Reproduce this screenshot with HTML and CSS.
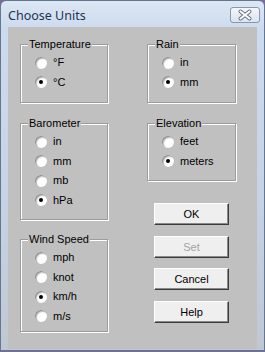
FILE: index.html
```html
<!DOCTYPE html>
<html>
<head>
<meta charset="utf-8">
<link rel="stylesheet" href="styles.css">
</head>
<body>
<div class="window">
  <div class="titlebar">
    <span class="title">Choose Units</span>
    <span class="close">
      <svg width="30" height="16" viewBox="0 0 30 16">
        <path d="M10.5 4.5 L19.5 11.5 M19.5 4.5 L10.5 11.5" stroke="#5d6d84" stroke-width="4" stroke-linecap="round" fill="none"/>
        <path d="M10.5 4.5 L19.5 11.5 M19.5 4.5 L10.5 11.5" stroke="#ffffff" stroke-width="2.2" stroke-linecap="round" fill="none"/>
      </svg>
    </span>
  </div>
  <div class="client">
    <div class="col">
      <div class="group g-temp">
        <span class="legend">Temperature</span>
        <div class="opt"><span class="radio"></span>°F</div>
        <div class="opt"><span class="radio on"></span>°C</div>
      </div>
      <div class="group g-baro">
        <span class="legend">Barometer</span>
        <div class="opt"><span class="radio"></span>in</div>
        <div class="opt"><span class="radio"></span>mm</div>
        <div class="opt"><span class="radio"></span>mb</div>
        <div class="opt"><span class="radio on"></span>hPa</div>
      </div>
      <div class="group g-wind">
        <span class="legend">Wind Speed</span>
        <div class="opt"><span class="radio"></span>mph</div>
        <div class="opt"><span class="radio"></span>knot</div>
        <div class="opt"><span class="radio on"></span>km/h</div>
        <div class="opt"><span class="radio"></span>m/s</div>
      </div>
    </div>
    <div class="col">
      <div class="group g-rain">
        <span class="legend">Rain</span>
        <div class="opt"><span class="radio"></span>in</div>
        <div class="opt"><span class="radio on"></span>mm</div>
      </div>
      <div class="group g-elev">
        <span class="legend">Elevation</span>
        <div class="opt"><span class="radio"></span>feet</div>
        <div class="opt"><span class="radio on"></span>meters</div>
      </div>
      <div class="buttons">
        <button class="btn">OK</button>
        <button class="btn" disabled>Set</button>
        <button class="btn">Cancel</button>
        <button class="btn">Help</button>
      </div>
    </div>
  </div>
</div>
</body>
</html>
```

FILE: styles.css
```css
html, body {
  margin: 0;
  padding: 0;
}
body {
  width: 265px;
  height: 352px;
  background: #7a6a9c;
  overflow: hidden;
  font-family: "Liberation Sans", Arial, sans-serif;
  font-size: 11px;
  color: #000;
}
.window {
  box-sizing: border-box;
  width: 265px;
  height: 351px;
  border: 1px solid #65768f;
  border-radius: 6px 6px 0 0;
  background: linear-gradient(to bottom, #dce7f4 0px, #cddbee 27px, #c6d3e4 200px, #c0c7d2 351px);
  display: flex;
  flex-direction: column;
}
.titlebar {
  height: 26px;
  flex: none;
  display: flex;
  align-items: flex-start;
  justify-content: space-between;
  padding: 0 4px 0 7px;
}
.title {
  font-family: "Noto Sans", "Liberation Sans", sans-serif;
  font-size: 12.5px;
  line-height: 16px;
  margin-top: 7px;
  color: #1f3352;
}
.close {
  box-sizing: border-box;
  width: 30px;
  height: 16px;
  margin-top: 6px;
  border: 1px solid #8797ad;
  border-radius: 3px;
  background: linear-gradient(to bottom, #f4f7fb, #dbe3ee);
  display: flex;
  align-items: center;
  justify-content: center;
  overflow: hidden;
}
.close svg {
  flex: none;
  margin: -1px;
}
.client {
  flex: 1;
  margin: 0 7px 1px 7px;
  background: #c0c0c0;
  display: grid;
  grid-template-columns: 88px 89px;
  column-gap: 39px;
  align-items: start;
  padding: 17px 0 0 12px;
}
.col {
  display: flex;
  flex-direction: column;
}
.group {
  position: relative;
  box-sizing: border-box;
  border: 1px solid #9c9c9c;
  box-shadow: inset 1px 1px 0 #fff, 1px 1px 0 #fff;
  padding: 8px 0 0 14px;
}
.g-temp, .g-rain { height: 59px; }
.g-baro { height: 97px; margin-top: 20px; }
.g-wind { height: 93px; margin-top: 19px; }
.g-elev { height: 58px; margin-top: 20px; }
.legend {
  position: absolute;
  top: -7px;
  left: 7px;
  padding: 0 1px;
  line-height: 13px;
  background: #c0c0c0;
}
.opt {
  height: 19.5px;
  display: flex;
  align-items: center;
  gap: 6px;
  line-height: 13px;
}
.radio {
  position: relative;
  flex: none;
  width: 12px;
  height: 12px;
  border-radius: 50%;
  background: #fff;
  box-shadow: inset 1px 1px 1px #8c8c8c, inset 2px 2px 1px #d4d4d4;
}
.radio.on::after {
  content: "";
  position: absolute;
  left: 4px;
  top: 4px;
  width: 4px;
  height: 4px;
  border-radius: 50%;
  background: #000;
}
.buttons {
  margin-top: 22px;
  display: flex;
  flex-direction: column;
  gap: 10.5px;
  padding-left: 7px;
}
.btn {
  box-sizing: border-box;
  width: 75px;
  height: 22px;
  margin: 0;
  padding: 0;
  font-family: "Liberation Sans", Arial, sans-serif;
  font-size: 11px;
  color: #000;
  background: #efefef;
  border: 1px solid;
  border-color: #ffffff #3c3c3c #3c3c3c #ffffff;
  box-shadow: inset -1px -1px 0 #8a8a8a;
  border-radius: 0;
}
.btn:disabled {
  color: #a3a3a3;
}
```
